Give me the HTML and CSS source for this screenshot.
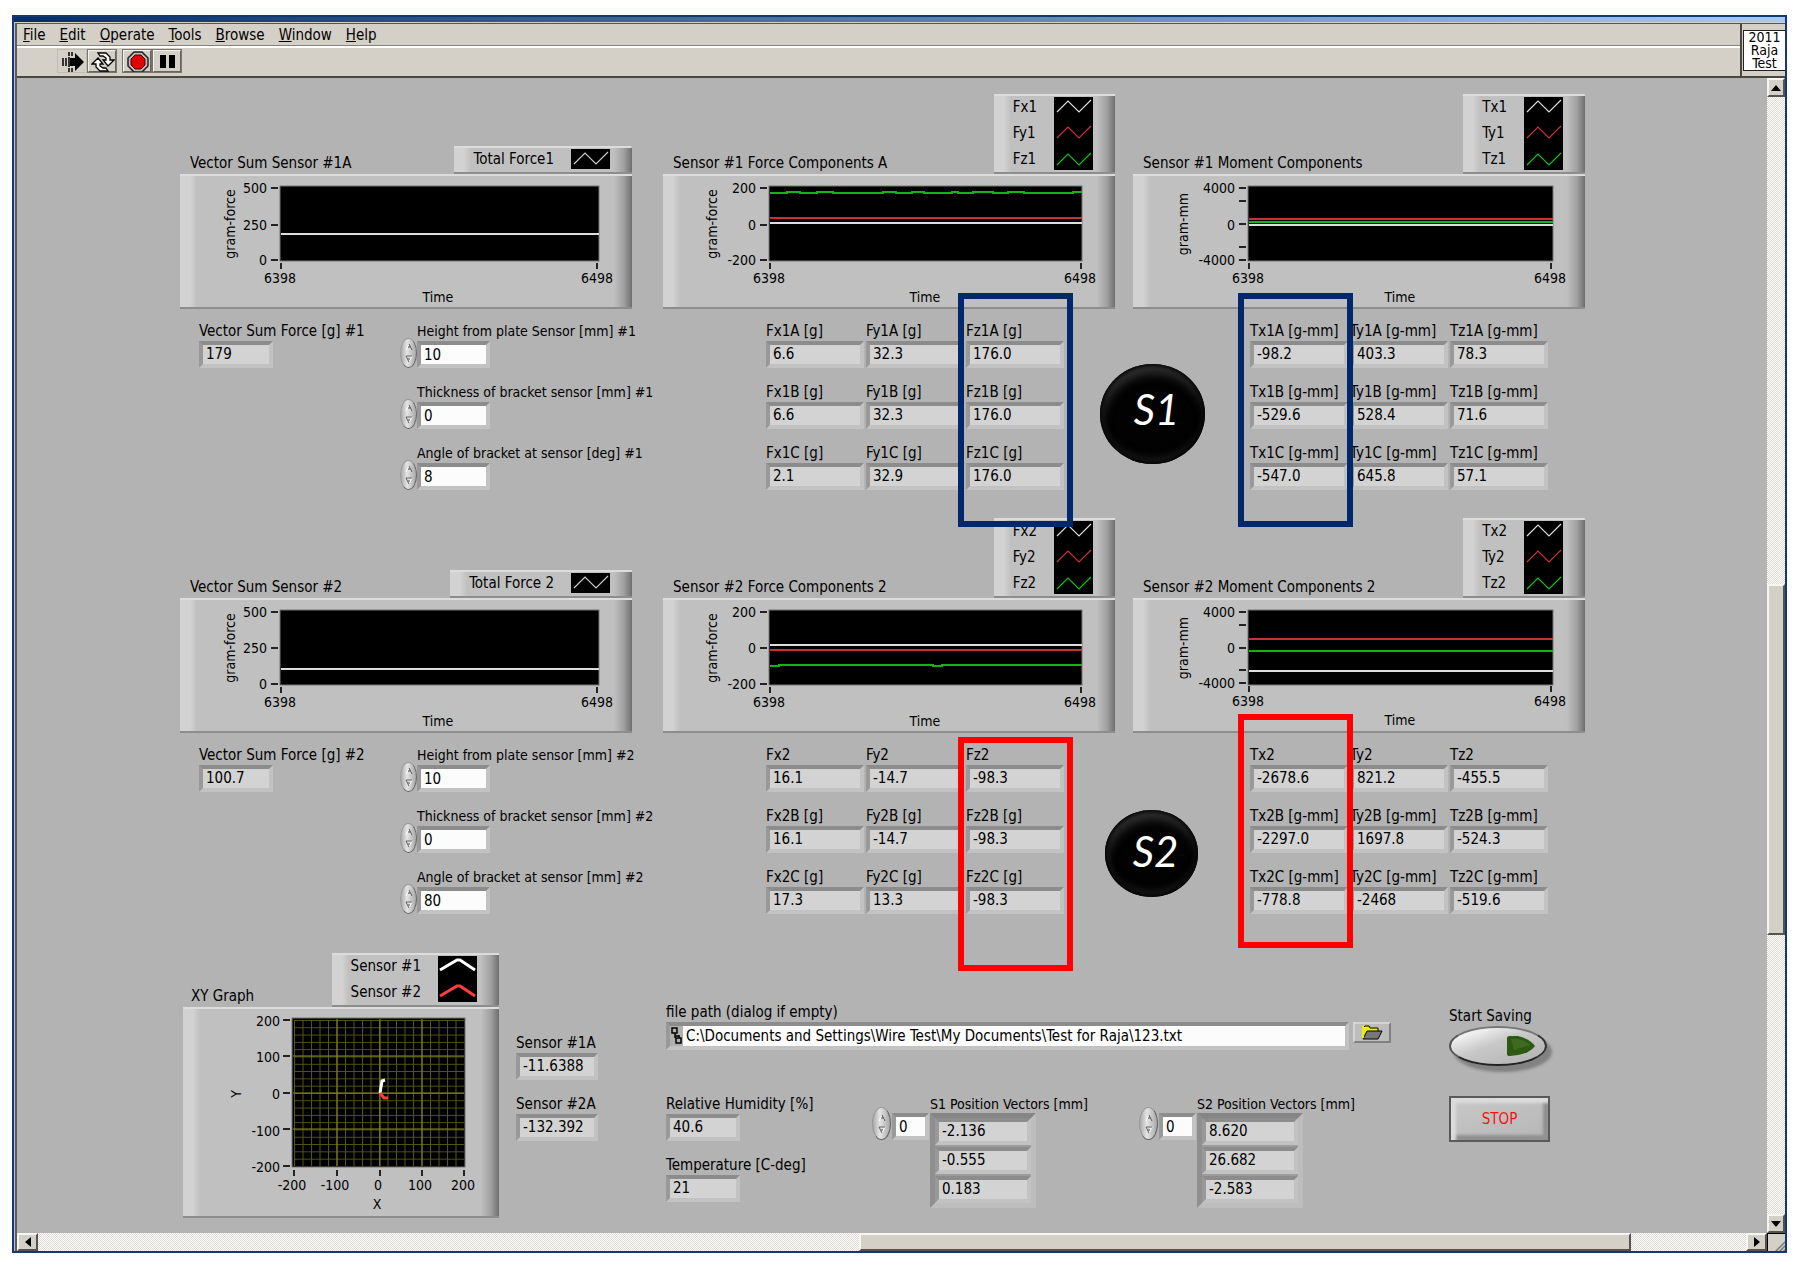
FILE: index.html
```html
<!DOCTYPE html>
<html lang="en">
<head>
<meta charset="utf-8">
<title>Wire Test Front Panel</title>
<link rel="stylesheet" href="styles.css">
</head>
<body>
<svg class="defs" aria-hidden="true">
  <symbol id="wave" viewBox="0 0 39 20"><path d="M3 15L14 4L25 15L37 3" fill="none" stroke="currentColor" stroke-width="1.2"/></symbol>
  <symbol id="peak" viewBox="0 0 39 20"><path d="M2 14L19 4L22 4L37 14" fill="none" stroke="currentColor" stroke-width="3"/></symbol>
  <symbol id="up" viewBox="0 0 8 8"><path d="M1 7L4 1L7 7" fill="#ddd" stroke="#fff"/><path d="M4 1L7 7M4 3V5" fill="none" stroke="#444"/></symbol>
  <symbol id="down" viewBox="0 0 8 8"><path d="M1 1H7L4 7Z" fill="#ddd" stroke="#fff"/><path d="M7 1H1L4 7M4 3V5" fill="none" stroke="#555"/></symbol>
</svg>
<div class="window">
  <div class="titlebar"></div>
  <header class="top">
    <div class="bars">
      <nav class="menu">
        <a href="#"><u>F</u>ile</a><a href="#"><u>E</u>dit</a><a href="#"><u>O</u>perate</a><a href="#"><u>T</u>ools</a><a href="#"><u>B</u>rowse</a><a href="#"><u>W</u>indow</a><a href="#"><u>H</u>elp</a>
      </nav>
      <div class="toolbar">
        <button class="tool flat" aria-label="Run"><svg width="24" height="22" viewBox="0 0 24 22"><path d="M9 7H14V2L23 11L14 20V15H9Z" fill="#000"/><path d="M2 7V15M5 7V15M8 6V16M8 1V5M11 1V5M8 17V21M11 17V21" stroke="#000" stroke-width="1.5"/></svg></button>
        <button class="tool" aria-label="Run continuously"><svg width="24" height="22" viewBox="0 0 24 22"><g fill="#fff" stroke="#000" stroke-width="1.3"><path d="M7 2H15L19 6V9H23L17 15L12 9H15V7L12 5H9Z"/><path d="M17 20H9L5 16V13H1L7 7L12 13H9V15L12 17H15Z"/></g></svg></button>
        <button class="tool apart" aria-label="Abort"><svg width="24" height="22" viewBox="0 0 24 22"><path d="M8 1H16L22 7V15L16 21H8L2 15V7Z" fill="#bbb" stroke="#222" stroke-width="1.5"/><path d="M9 4H15L19 8V14L15 18H9L5 14V8Z" fill="#e00000" stroke="#500"/></svg></button>
        <button class="tool" aria-label="Pause"><svg width="24" height="22" viewBox="0 0 24 22"><path d="M4 4H10V17H4ZM13 4H19V17H13Z" fill="#000"/></svg></button>
      </div>
    </div>
    <div class="vi-icon"><span>2011<br>Raja<br>Test</span></div>
  </header>

  <div class="view">
    <main class="panel">
      <div class="row">
        <section>
          <figure class="chart">
            <div class="head">
              <figcaption>Vector Sum Sensor #1A</figcaption>
              <div class="legend"><ul><li>Total Force1</li></ul><svg class="swatch" width="39" height="20"><use href="#wave" width="39" height="20"/></svg></div>
            </div>
            <svg class="plot" viewBox="0 0 452 135">
              <rect class="area" x="100" y="12" width="319" height="75"/>
              <path class="tick" d="M91 14h7M91 51h7M91 86h7M101 89v6M417 89v6"/>
              <path class="white" d="M101 60H419"/>
              <g class="ynum"><text x="87" y="19">500</text><text x="87" y="56">250</text><text x="87" y="91">0</text></g>
              <g class="mid"><text x="100" y="109">6398</text><text x="417" y="109">6498</text><text x="258" y="128">Time</text><text transform="translate(55 50) rotate(-90)">gram-force</text></g>
            </svg>
          </figure>
          <div class="fields settings">
            <label class="field"><span>Vector Sum Force [g] #1</span><output>179</output></label>
            <div class="controls">
              <div class="control"><label for="h1">Height from plate Sensor [mm] #1</label><div class="spin"><button aria-label="Increase"><svg><use href="#up"/></svg></button><button aria-label="Decrease"><svg><use href="#down"/></svg></button></div><input id="h1" value="10"></div>
              <div class="control"><label for="t1">Thickness of bracket sensor [mm] #1</label><div class="spin"><button aria-label="Increase"><svg><use href="#up"/></svg></button><button aria-label="Decrease"><svg><use href="#down"/></svg></button></div><input id="t1" value="0"></div>
              <div class="control"><label for="a1">Angle of bracket at sensor [deg] #1</label><div class="spin"><button aria-label="Increase"><svg><use href="#up"/></svg></button><button aria-label="Decrease"><svg><use href="#down"/></svg></button></div><input id="a1" value="8"></div>
            </div>
          </div>
        </section>

        <section>
          <figure class="chart">
            <div class="head">
              <figcaption>Sensor #1 Force Components A</figcaption>
              <div class="legend"><ul><li>Fx1</li><li>Fy1</li><li>Fz1</li></ul><svg class="swatch" width="39" height="73"><use class="w" href="#wave" width="39" height="20"/><use class="r" href="#wave" y="26" width="39" height="20"/><use class="g" href="#wave" y="53" width="39" height="20"/></svg></div>
            </div>
            <svg class="plot" viewBox="0 0 452 135">
              <rect class="area" x="106" y="12" width="313" height="75"/>
              <path class="tick" d="M97 14h7M97 51h7M97 86h7M107 89v6M418 89v6"/>
              <path class="green" d="M107 19H124V18H137V19H154V18H170V19H220V18H233V19H249V18H261V19H289V18H295V19H310V18H330V19H345V18H361V19H410V18H419"/>
              <path class="red" d="M107 44H419"/><path class="white" d="M107 49H419"/>
              <g class="ynum"><text x="93" y="19">200</text><text x="93" y="56">0</text><text x="93" y="91">-200</text></g>
              <g class="mid"><text x="106" y="109">6398</text><text x="417" y="109">6498</text><text x="262" y="128">Time</text><text transform="translate(54 50) rotate(-90)">gram-force</text></g>
            </svg>
          </figure>
          <div class="fields forces">
            <label class="field"><span>Fx1A [g]</span><output>6.6</output></label>
            <label class="field"><span>Fy1A [g]</span><output>32.3</output></label>
            <label class="field"><span>Fz1A [g]</span><output>176.0</output></label>
            <label class="field"><span>Fx1B [g]</span><output>6.6</output></label>
            <label class="field"><span>Fy1B [g]</span><output>32.3</output></label>
            <label class="field"><span>Fz1B [g]</span><output>176.0</output></label>
            <label class="field"><span>Fx1C [g]</span><output>2.1</output></label>
            <label class="field"><span>Fy1C [g]</span><output>32.9</output></label>
            <label class="field"><span>Fz1C [g]</span><output>176.0</output></label>
            <div class="mark blue"></div>
            <div class="badge s1">S1</div>
          </div>
        </section>

        <section>
          <figure class="chart">
            <div class="head">
              <figcaption>Sensor #1 Moment Components</figcaption>
              <div class="legend"><ul><li>Tx1</li><li>Ty1</li><li>Tz1</li></ul><svg class="swatch" width="39" height="73"><use class="w" href="#wave" width="39" height="20"/><use class="r" href="#wave" y="26" width="39" height="20"/><use class="g" href="#wave" y="53" width="39" height="20"/></svg></div>
            </div>
            <svg class="plot" viewBox="0 0 452 135">
              <rect class="area" x="115" y="12" width="305" height="75"/>
              <path class="tick" d="M106 14h7M106 27h7M106 50h7M106 73h7M106 86h7M116 89v6M418 89v6"/>
              <path class="red" d="M116 45H420"/><path class="green" d="M116 48H420"/><path class="white" d="M116 51H420"/>
              <g class="ynum"><text x="102" y="19">4000</text><text x="102" y="56">0</text><text x="102" y="91">-4000</text></g>
              <g class="mid"><text x="115" y="109">6398</text><text x="417" y="109">6498</text><text x="267" y="128">Time</text><text transform="translate(55 50) rotate(-90)">gram-mm</text></g>
            </svg>
          </figure>
          <div class="fields moments">
            <label class="field"><span>Tx1A [g-mm]</span><output>-98.2</output></label>
            <label class="field"><span>Ty1A [g-mm]</span><output>403.3</output></label>
            <label class="field"><span>Tz1A [g-mm]</span><output>78.3</output></label>
            <label class="field"><span>Tx1B [g-mm]</span><output>-529.6</output></label>
            <label class="field"><span>Ty1B [g-mm]</span><output>528.4</output></label>
            <label class="field"><span>Tz1B [g-mm]</span><output>71.6</output></label>
            <label class="field"><span>Tx1C [g-mm]</span><output>-547.0</output></label>
            <label class="field"><span>Ty1C [g-mm]</span><output>645.8</output></label>
            <label class="field"><span>Tz1C [g-mm]</span><output>57.1</output></label>
            <div class="mark blue"></div>
          </div>
        </section>
      </div>

      <div class="row">
        <section>
          <figure class="chart">
            <div class="head">
              <figcaption>Vector Sum Sensor #2</figcaption>
              <div class="legend"><ul><li>Total Force 2</li></ul><svg class="swatch" width="39" height="20"><use href="#wave" width="39" height="20"/></svg></div>
            </div>
            <svg class="plot" viewBox="0 0 452 135">
              <rect class="area" x="100" y="12" width="319" height="75"/>
              <path class="tick" d="M91 14h7M91 50h7M91 86h7M101 89v6M417 89v6"/>
              <path class="white" d="M101 71H419"/>
              <g class="ynum"><text x="87" y="19">500</text><text x="87" y="55">250</text><text x="87" y="91">0</text></g>
              <g class="mid"><text x="100" y="109">6398</text><text x="417" y="109">6498</text><text x="258" y="128">Time</text><text transform="translate(55 50) rotate(-90)">gram-force</text></g>
            </svg>
          </figure>
          <div class="fields settings">
            <label class="field"><span>Vector Sum Force [g] #2</span><output>100.7</output></label>
            <div class="controls">
              <div class="control"><label for="h2">Height from plate sensor [mm] #2</label><div class="spin"><button aria-label="Increase"><svg><use href="#up"/></svg></button><button aria-label="Decrease"><svg><use href="#down"/></svg></button></div><input id="h2" value="10"></div>
              <div class="control"><label for="t2">Thickness of bracket sensor [mm] #2</label><div class="spin"><button aria-label="Increase"><svg><use href="#up"/></svg></button><button aria-label="Decrease"><svg><use href="#down"/></svg></button></div><input id="t2" value="0"></div>
              <div class="control"><label for="a2">Angle of bracket at sensor [mm] #2</label><div class="spin"><button aria-label="Increase"><svg><use href="#up"/></svg></button><button aria-label="Decrease"><svg><use href="#down"/></svg></button></div><input id="a2" value="80"></div>
            </div>
          </div>
        </section>

        <section>
          <figure class="chart">
            <div class="head">
              <figcaption>Sensor #2 Force Components 2</figcaption>
              <div class="legend"><ul><li>Fx2</li><li>Fy2</li><li>Fz2</li></ul><svg class="swatch" width="39" height="73"><use class="w" href="#wave" width="39" height="20"/><use class="r" href="#wave" y="26" width="39" height="20"/><use class="g" href="#wave" y="53" width="39" height="20"/></svg></div>
            </div>
            <svg class="plot" viewBox="0 0 452 135">
              <rect class="area" x="106" y="12" width="313" height="75"/>
              <path class="tick" d="M97 14h7M97 50h7M97 86h7M107 89v6M418 89v6"/>
              <path class="green" d="M107 68H116V67H270V68H279V67H419"/>
              <path class="red" d="M107 52H419"/><path class="white" d="M107 47H419"/>
              <g class="ynum"><text x="93" y="19">200</text><text x="93" y="55">0</text><text x="93" y="91">-200</text></g>
              <g class="mid"><text x="106" y="109">6398</text><text x="417" y="109">6498</text><text x="262" y="128">Time</text><text transform="translate(54 50) rotate(-90)">gram-force</text></g>
            </svg>
          </figure>
          <div class="fields forces">
            <label class="field"><span>Fx2</span><output>16.1</output></label>
            <label class="field"><span>Fy2</span><output>-14.7</output></label>
            <label class="field"><span>Fz2</span><output>-98.3</output></label>
            <label class="field"><span>Fx2B [g]</span><output>16.1</output></label>
            <label class="field"><span>Fy2B [g]</span><output>-14.7</output></label>
            <label class="field"><span>Fz2B [g]</span><output>-98.3</output></label>
            <label class="field"><span>Fx2C [g]</span><output>17.3</output></label>
            <label class="field"><span>Fy2C [g]</span><output>13.3</output></label>
            <label class="field"><span>Fz2C [g]</span><output>-98.3</output></label>
            <div class="mark red-mark"></div>
            <div class="badge s2">S2</div>
          </div>
        </section>

        <section>
          <figure class="chart">
            <div class="head">
              <figcaption>Sensor #2 Moment Components 2</figcaption>
              <div class="legend"><ul><li>Tx2</li><li>Ty2</li><li>Tz2</li></ul><svg class="swatch" width="39" height="73"><use class="w" href="#wave" width="39" height="20"/><use class="r" href="#wave" y="26" width="39" height="20"/><use class="g" href="#wave" y="53" width="39" height="20"/></svg></div>
            </div>
            <svg class="plot" viewBox="0 0 452 135">
              <rect class="area" x="115" y="12" width="305" height="75"/>
              <path class="tick" d="M106 14h7M106 27h7M106 50h7M106 72h7M106 85h7M116 88v6M418 88v6"/>
              <path class="red" d="M116 41H420"/><path class="green" d="M116 53H420"/><path class="white" d="M116 73H420"/>
              <g class="ynum"><text x="102" y="19">4000</text><text x="102" y="55">0</text><text x="102" y="90">-4000</text></g>
              <g class="mid"><text x="115" y="108">6398</text><text x="417" y="108">6498</text><text x="267" y="127">Time</text><text transform="translate(55 50) rotate(-90)">gram-mm</text></g>
            </svg>
          </figure>
          <div class="fields moments">
            <label class="field"><span>Tx2</span><output>-2678.6</output></label>
            <label class="field"><span>Ty2</span><output>821.2</output></label>
            <label class="field"><span>Tz2</span><output>-455.5</output></label>
            <label class="field"><span>Tx2B [g-mm]</span><output>-2297.0</output></label>
            <label class="field"><span>Ty2B [g-mm]</span><output>1697.8</output></label>
            <label class="field"><span>Tz2B [g-mm]</span><output>-524.3</output></label>
            <label class="field"><span>Tx2C [g-mm]</span><output>-778.8</output></label>
            <label class="field"><span>Ty2C [g-mm]</span><output>-2468</output></label>
            <label class="field"><span>Tz2C [g-mm]</span><output>-519.6</output></label>
            <div class="mark red-mark"></div>
          </div>
        </section>
      </div>

      <div class="bottom">
        <figure class="chart xy">
          <div class="head">
            <figcaption>XY Graph</figcaption>
            <div class="legend"><ul><li>Sensor #1</li><li>Sensor #2</li></ul><svg class="swatch" width="39" height="46"><use class="w2" href="#peak" width="39" height="20"/><use class="r2" href="#peak" y="26" width="39" height="20"/></svg></div>
          </div>
          <svg class="plot" viewBox="0 0 316 211">
            <defs><pattern id="grid" x="111" y="13" width="8.5" height="7.3" patternUnits="userSpaceOnUse"><path d="M0 .5H8.5M.5 0V7.3" stroke="#56561a"/></pattern></defs>
            <rect class="area" x="109" y="11" width="173" height="149"/>
            <rect x="111" y="13" width="170" height="146" fill="url(#grid)"/>
            <path d="M154 12V159M197 12V159M239 12V159M110 49H281M110 86H281M110 122H281" stroke="#8c8c20" fill="none"/>
            <path d="M197 86L199 74L202 73" fill="none" stroke="#fff" stroke-width="3"/>
            <path d="M197 86L201 91H205" fill="none" stroke="#ff3c3c" stroke-width="3"/>
            <path class="tick" d="M100 13h7M100 49h7M100 86h7M100 122h7M100 159h7M111 163v6M154 163v6M197 163v6M239 163v6M281 163v6"/>
            <g class="ynum"><text x="97" y="19">200</text><text x="97" y="55">100</text><text x="97" y="92">0</text><text x="97" y="129">-100</text><text x="97" y="165">-200</text></g>
            <g class="mid"><text x="109" y="183">-200</text><text x="152" y="183">-100</text><text x="195" y="183">0</text><text x="237" y="183">100</text><text x="280" y="183">200</text><text x="194" y="202">X</text><text transform="translate(58 87) rotate(-90)">Y</text></g>
          </svg>
        </figure>

        <div class="stack readouts">
          <label class="field"><span>Sensor #1A</span><output>-11.6388</output></label>
          <label class="field"><span>Sensor #2A</span><output>-132.392</output></label>
        </div>

        <div class="files">
          <label for="path">file path (dialog if empty)</label>
          <div class="path">
            <div class="pathbox"><svg width="13" height="20" viewBox="0 0 13 20"><path d="M2 2H7V7H2ZM6 12H11V17H6ZM5 7V12M9 9V12M5 10H9" fill="none" stroke="#000" stroke-width="1.5"/></svg><input id="path" value="C:\Documents and Settings\Wire Test\My Documents\Test for Raja\123.txt"></div>
            <button class="browse" aria-label="Browse"><svg width="22" height="15" viewBox="0 0 22 15"><path d="M2 13V3L4 1H8L9 3H17V6" fill="#ee0" stroke="#000"/><path d="M2 14L6 6H21L17 14Z" fill="#777" stroke="#000"/><path d="M2 1V13" stroke="#ee0" stroke-width="2"/></svg></button>
          </div>
          <div class="climate">
            <div class="stack">
              <label class="field"><span>Relative Humidity [%]</span><output>40.6</output></label>
              <label class="field"><span>Temperature [C-deg]</span><output>21</output></label>
            </div>
            <div class="vectors">
              <div class="spin"><button aria-label="Increase"><svg><use href="#up"/></svg></button><button aria-label="Decrease"><svg><use href="#down"/></svg></button></div>
              <input id="v1" aria-label="S1 index" value="0">
              <label for="v1">S1 Position Vectors [mm]</label>
              <div class="array"><output>-2.136</output><output>-0.555</output><output>0.183</output></div>
            </div>
            <div class="vectors">
              <div class="spin"><button aria-label="Increase"><svg><use href="#up"/></svg></button><button aria-label="Decrease"><svg><use href="#down"/></svg></button></div>
              <input id="v2" aria-label="S2 index" value="0">
              <label for="v2">S2 Position Vectors [mm]</label>
              <div class="array"><output>8.620</output><output>26.682</output><output>-2.583</output></div>
            </div>
          </div>
        </div>

        <div class="actions">
          <label for="save">Start Saving</label>
          <button id="save" class="save"><svg width="30" height="20" viewBox="0 0 30 20"><path d="M1 2Q1 0 4 0H12Q24 3 29 10Q24 17 12 19L4 20Q1 20 1 18Z" fill="#2c5a12"/><path d="M5 3H12Q20 5 24 9L8 14Z" fill="#3d6b22"/></svg></button>
          <button class="stop">STOP</button>
        </div>
      </div>
    </main>
    <div class="vscroll"><button class="arrow" aria-label="Scroll up"><svg width="10" height="6"><path d="M0 6L5 0L10 6Z"/></svg></button><div class="before"></div><div class="thumb"></div><div class="after"></div><button class="arrow" aria-label="Scroll down"><svg width="10" height="6"><path d="M0 0H10L5 6Z"/></svg></button></div>
  </div>
  <div class="hscroll"><button class="arrow" aria-label="Scroll left"><svg width="6" height="10"><path d="M6 0V10L0 5Z"/></svg></button><div class="before"></div><div class="thumb"></div><div class="after"></div><button class="arrow" aria-label="Scroll right"><svg width="6" height="10"><path d="M0 0L6 5L0 10Z"/></svg></button><svg class="grip" width="18" height="18"><path d="M7 18L18 7M11 18L18 11M15 18L18 15" stroke="#777" stroke-width="1.5"/></svg></div>
</div>
</body>
</html>
```
FILE: styles.css
```css
* { box-sizing: border-box; }
body {
  margin: 0;
  padding: 15px 13px 15px 12px;
  min-height: 100vh;
  display: flex;
  background: #fff;
  color: #000;
  font: 15px/20px "DejaVu Sans Condensed", "Noto Sans", sans-serif;
}
button, input { font: inherit; color: inherit; margin: 0; padding: 0; border-radius: 0; }
figure, ul { margin: 0; padding: 0; list-style: none; }
svg { display: block; }
label, figcaption, li { white-space: nowrap; }
.defs { position: absolute; width: 0; height: 0; }

.window {
  flex: 1;
  display: flex;
  flex-direction: column;
  border: 2px solid #17376f;
  background: linear-gradient(to right, #b9c3d8 0 1px, #5c5c5c 1px 3px, #b3b3b3 3px);
  padding-left: 3px;
}
.titlebar {
  height: 6px;
  margin-left: -3px;
  background: linear-gradient(to right, #0a2a70, #a6caf0);
  border-bottom: 1px solid #d4d0c8;
}
.top { display: flex; background: #d4d0c8; border-bottom: 2px solid #48483f; }
.bars { flex: 1; border-top: 1px solid #555; }
.menu {
  display: flex;
  gap: 14px;
  height: 22px;
  padding-left: 6px;
  border-bottom: 1px solid #86837c;
}
.menu a { color: #000; text-decoration: none; line-height: 22px; }
.toolbar {
  display: flex;
  height: 29px;
  padding: 1px 0 2px 40px;
  border-top: 2px solid #fff;
}
.tool {
  width: 30px;
  padding: 0 2px;
  background: #d4d0c8;
  border: 2px solid;
  border-color: #f4f2ee #66645e #66645e #f4f2ee;
  outline: 1px solid #77756f;
  outline-offset: -1px;
}
.tool.flat { border-color: transparent; outline-color: #c0bcb4; }
.tool.apart { margin-left: 5px; }
.vi-icon {
  width: 45px;
  padding: 6px 0 5px 1px;
  border-left: 2px solid #48483f;
  border-top: 1px solid #555;
}
.vi-icon span {
  display: block;
  height: 41px;
  border: 1px solid #222;
  border-right: 0;
  background: #fff;
  text-align: center;
  font-size: 14px;
  line-height: 13px;
}

.view { flex: 1; display: flex; }
.panel { flex: 1; padding: 16px 0 15px 163px; background: #b3b3b3; overflow: hidden; }
.row { display: grid; grid-template-columns: 483px 470px 453px; height: 424px; }

.head { display: flex; justify-content: space-between; align-items: flex-end; height: 80px; padding-left: 10px; }
.head figcaption { margin-bottom: 1px; }
.chart { width: 452px; }
.legend, .plot {
  background:
    linear-gradient(#dcdcdc, #dcdcdc) top / 100% 2px no-repeat,
    linear-gradient(#8d8d8d, #8d8d8d) bottom / 100% 2px no-repeat,
    linear-gradient(to right, #d2d2d2 0 10px, #c0c0c0 17px calc(100% - 18px), #a0a0a0 calc(100% - 8px), #6e6e6e) #c0c0c0;
}
.legend { display: flex; gap: 17px; padding: 0 22px 2px 19px; }
.legend li { line-height: 26px; }
.swatch { margin-top: 3px; background: #000; color: #ccc; }
.swatch .w { color: #ddd; }
.swatch .w2 { color: #fff; }
.swatch .r { color: #d03434; }
.swatch .r2 { color: #ff3c3c; }
.swatch .g { color: #14c414; }
.plot { width: 100%; font-size: 14px; }
.area { fill: #000; stroke: #777; stroke-width: 1; }
.tick { fill: none; stroke: #222; stroke-width: 2; }
.white { fill: none; stroke: #ddd; stroke-width: 2; }
.red { fill: none; stroke: #c83232; stroke-width: 2; }
.green { fill: none; stroke: #14b414; stroke-width: 2; }
.ynum { text-anchor: end; }
.mid { text-anchor: middle; }

.fields { position: relative; display: grid; row-gap: 14px; padding-top: 12px; align-content: start; }
.forces, .moments { grid-template-columns: repeat(3, 100px); }
.forces { padding-left: 103px; }
.moments { padding-left: 117px; }
.settings { grid-template-columns: 201px auto; padding-left: 19px; }
.controls, .stack { display: grid; row-gap: 14px; align-content: start; }
.field { display: block; }
.field span { display: block; }
output, .control input, .vectors input {
  display: block;
  width: 98px;
  height: 27px;
  padding-left: 3px;
  line-height: 19px;
  border: 4px solid;
  border-color: #8c8c8c #c2c2c2 #c2c2c2 #999;
  background: #d3d3d3;
}
.settings output, .stack output { width: 74px; }
.readouts output { width: 82px; }
.control { display: grid; grid-template-columns: 17px 73px; height: 47px; }
.control label { grid-column: 2; font-size: 14px; }
.control input { width: 73px; background: #fcfcfc; }
.control .spin { margin-top: -3px; }
.spin {
  display: flex;
  flex-direction: column;
  align-items: center;
  justify-content: center;
  gap: 2px;
  width: 17px;
  height: 30px;
  border-radius: 50%;
  border: 1px solid #999;
  border-right-color: #666;
  border-bottom-color: #666;
  background: linear-gradient(to right, #aaa, #e4e4e4 40%, #a8a8a8);
}
.spin button { width: 10px; height: 10px; border: 0; background: none; }
.spin svg { width: 8px; height: 8px; margin: 1px; }

.mark { position: absolute; z-index: 2; width: 115px; height: 234px; border: 6px solid; }
.blue { border-color: #00286b; top: -16px; }
.red-mark { border-color: #f00; top: 4px; }
.forces .mark { left: 295px; }
.moments .mark { left: 105px; }
.moments .red-mark { top: -19px; }
.badge {
  position: absolute;
  z-index: 2;
  display: flex;
  align-items: center;
  justify-content: center;
  border-radius: 50%;
  background: #020202;
  box-shadow: inset 0 0 4px 2px #000, inset 2px 10px 12px -2px #3c3c3c, inset 0 -8px 8px -3px #222;
  color: #fff;
  font: italic 42px/50px Lato, sans-serif;
}
.s1 { left: 437px; top: 55px; width: 105px; height: 100px; padding: 0 0 10px 8px; }
.s2 { left: 442px; top: 77px; width: 93px; height: 87px; padding: 0 0 6px 8px; }

.bottom { display: grid; grid-template-columns: 336px 150px 783px auto; }
.xy { width: 316px; margin: 10px 0 0 3px; }
.xy .head { height: 55px; padding-left: 8px; }
.readouts { padding-top: 91px; }
.files { padding-top: 60px; }
.files > label { display: block; }
.path { display: flex; gap: 4px; }
.pathbox {
  display: flex;
  width: 683px;
  height: 28px;
  border: 4px solid;
  border-color: #8c8c8c #c2c2c2 #c2c2c2 #999;
  background: #b0b0b0;
}
.pathbox input { flex: 1; border: 0; padding-left: 3px; background: #fcfcfc; }
.browse {
  width: 38px;
  height: 21px;
  padding: 0 6px;
  background: #bdbdbd;
  border: 2px solid;
  border-color: #d4d4d4 #808080 #808080 #d4d4d4;
}
.climate { display: grid; grid-template-columns: 206px 267px 267px; margin-top: 44px; }
.vectors { display: grid; grid-template-columns: 20px 38px 106px; grid-template-rows: 19px auto; align-items: start; }
.vectors .spin { grid-area: 2 / 1; width: 19px; height: 33px; margin-top: -6px; }
.vectors input { grid-area: 2 / 2; width: 37px; background: #fcfcfc; }
.vectors label { grid-area: 1 / 3; width: 150px; font-size: 14px; }
.array {
  grid-area: 2 / 3;
  display: grid;
  gap: 2px;
  border: 5px solid;
  border-color: #858585 #bdbdbd #bdbdbd #8f8f8f;
  background: #9c9c9c;
}
.array output { width: 96px; }
.actions { padding-top: 64px; }
.actions label { display: block; }
.save {
  display: flex;
  align-items: center;
  justify-content: flex-end;
  width: 98px;
  height: 40px;
  padding-right: 9px;
  border: 2px solid;
  border-color: #777 #333 #222 #555;
  border-radius: 50%;
  background: linear-gradient(160deg, #f4f4f4 15%, #c8c8c8 45%, #b4b4b4 90%);
  box-shadow: 5px 6px 3px #828282;
}
.stop {
  width: 101px;
  height: 46px;
  margin-top: 30px;
  border: 2px solid #5a5a5a;
  background: linear-gradient(160deg, #c8c8c8, #b6b6b6);
  box-shadow: inset 5px 5px 3px #dcdcdc, inset -5px -5px 3px #909090;
  color: #f01414;
}

.vscroll { display: flex; flex-direction: column; width: 18px; }
.hscroll { display: flex; height: 18px; }
.vscroll, .hscroll { background: repeating-conic-gradient(#fff 0 25%, #dcd9d2 0 50%) 0 0 / 2px 2px; }
.arrow, .thumb {
  background: #d4d0c8;
  border: 2px solid;
  border-color: #f8f6f2 #55534e #55534e #f8f6f2;
}
.arrow { display: flex; align-items: center; justify-content: center; flex: none; }
.vscroll .arrow { width: 18px; height: 19px; }
.hscroll .arrow { width: 21px; height: 18px; }
.vscroll .before { flex: 488; }
.vscroll .thumb { flex: 348; }
.vscroll .after { flex: 280; }
.hscroll .before { flex: 823; }
.hscroll .thumb { flex: 770; }
.hscroll .after { flex: 115; }
.grip { flex: none; background: #d4d0c8; border-left: 1px solid #000; border-top: 1px solid #000; }
```
